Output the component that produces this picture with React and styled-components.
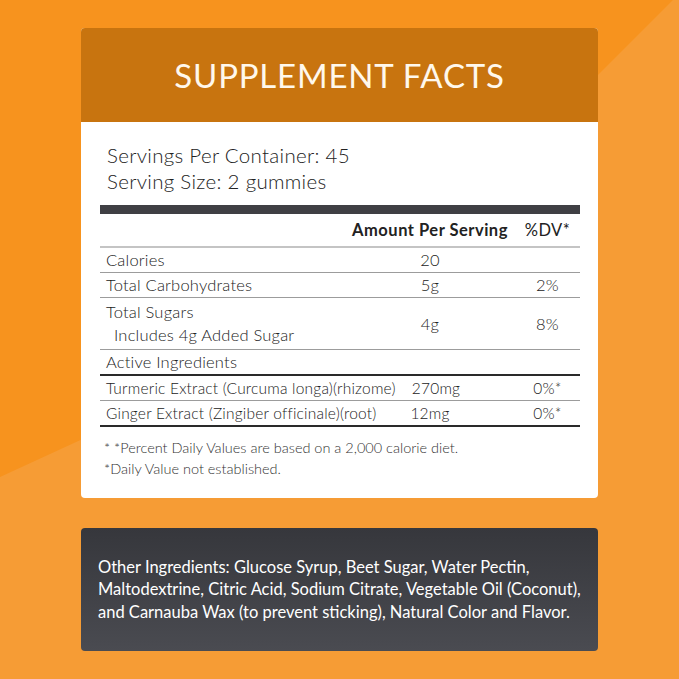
import React from 'react';
import styled, { createGlobalStyle } from 'styled-components';

const GlobalStyle = createGlobalStyle`
  html, body {
    margin: 0;
    padding: 0;
  }
  body {
    font-family: Lato, "Open Sans", sans-serif;
    color: #2b2b2b;
  }
`;

const rows = [
  { label: 'Calories', amount: '20', dv: '' },
  { label: 'Total Carbohydrates', amount: '5g', dv: '2%' },
  { label: 'Total Sugars', sub: 'Includes 4g Added Sugar', amount: '4g', dv: '8%', tall: true },
  { label: 'Active Ingredients', amount: '', dv: '', strong: true },
  { label: 'Turmeric Extract (Curcuma longa)(rhizome)', amount: '270mg', dv: '0%*', small: true, shift: 6 },
  { label: 'Ginger Extract (Zingiber officinale)(root)', amount: '12mg', dv: '0%*', small: true, strong: true },
];

const otherLines = [
  'Other Ingredients: Glucose Syrup, Beet Sugar, Water Pectin,',
  'Maltodextrine, Citric Acid, Sodium Citrate, Vegetable Oil (Coconut),',
  'and Carnauba Wax (to prevent sticking), Natural Color and Flavor.',
];

const App = () => {
  return (
    <Page>
      <GlobalStyle />
      <Card>
        <Header>SUPPLEMENT FACTS</Header>
        <Body>
          <Servings>
            <div>Servings Per Container: 45</div>
            <div>Serving Size: 2 gummies</div>
          </Servings>
          <ThickBar />
          <Table>
            <HeadRow>
              <span />
              <HeadCell $weight={700}>Amount Per Serving</HeadCell>
              <HeadCell $weight={400}>%DV*</HeadCell>
            </HeadRow>
            {rows.map((r) => (
              <Row key={r.label} $tall={r.tall} $strong={r.strong} $small={r.small}>
                <Label>
                  {r.label}
                  {r.sub && <Sub>{r.sub}</Sub>}
                </Label>
                <Amount $shift={r.shift}>{r.amount}</Amount>
                <Dv>{r.dv}</Dv>
              </Row>
            ))}
          </Table>
          <Notes>
            <Note>* *Percent Daily Values are based on a 2,000 calorie diet.</Note>
            <Note>*Daily Value not established.</Note>
          </Notes>
        </Body>
      </Card>
      <Other>
        {otherLines.map((line) => (
          <OtherLine key={line}>{line}</OtherLine>
        ))}
      </Other>
    </Page>
  );
};

export default App;

const Page = styled.div`
  position: relative;
  width: 679px;
  height: 679px;
  box-sizing: border-box;
  padding: 28px 81px 0;
  background: #f7931e;
  overflow: hidden;
  display: flex;
  flex-direction: column;
  gap: 30px;

  &::before {
    content: '';
    position: absolute;
    inset: 0;
    background: #f69c35;
    clip-path: polygon(0 477px, 363px 310px, 673px 0, 679px 0, 679px 679px, 0 679px);
  }
`;

const Card = styled.section`
  position: relative;
  height: 470px;
  background: #fff;
  border-radius: 4px;
  overflow: hidden;
  display: flex;
  flex-direction: column;
`;

const Header = styled.h1`
  margin: 0;
  height: 94px;
  display: flex;
  align-items: center;
  justify-content: center;
  background: #c8740f;
  color: #fff8ec;
  font-family: Lato, sans-serif;
  font-weight: 400;
  font-size: 33px;
  letter-spacing: 0.8px;
`;

const Body = styled.div`
  padding: 20px 18px 0 19px;
`;

const Servings = styled.div`
  padding-left: 7px;
  font-size: 20.5px;
  font-weight: 300;
  line-height: 26px;
  letter-spacing: 0.3px;
  color: #222;
`;

const ThickBar = styled.div`
  margin-top: 11px;
  height: 9px;
  background: #3f3f44;
`;

const Table = styled.div`
  display: flex;
  flex-direction: column;
`;

const grid = `
  display: grid;
  grid-template-columns: minmax(0, 1fr) 170px 65px;
  align-items: center;
`;

const HeadRow = styled.div`
  ${grid}
  height: 32px;
  border-bottom: 2px solid #c4c4c4;
`;

const HeadCell = styled.span`
  text-align: center;
  font-size: 16.5px;
  font-weight: ${(p) => p.$weight};
  color: #222;
  letter-spacing: 0.5px;
`;

const Row = styled.div`
  ${grid}
  height: ${(p) => (p.$tall ? 51 : 24)}px;
  border-bottom: ${(p) => (p.$strong ? '2px solid #2a2a2a' : '1px solid #9c9c9c')};
  font-size: ${(p) => (p.$small ? 15.5 : 16.5)}px;
  font-weight: 300;
  letter-spacing: 0.2px;
  color: #222;
`;

const Label = styled.span`
  padding-left: 6px;
  display: flex;
  flex-direction: column;
  line-height: 23px;
  white-space: nowrap;
`;

const Sub = styled.span`
  padding-left: 8px;
`;

const Amount = styled.span`
  text-align: center;
  padding-left: ${(p) => (p.$shift || 0) * 2}px;
`;

const Dv = styled.span`
  text-align: center;
`;

const Notes = styled.div`
  padding: 12px 0 0 4px;
  display: flex;
  flex-direction: column;
  gap: 4px;
`;

const Note = styled.div`
  font-size: 14.5px;
  font-weight: 300;
  line-height: 17px;
  color: #333;
`;

const Other = styled.section`
  position: relative;
  height: 123px;
  box-sizing: border-box;
  padding: 0 14px 0 17px;
  border-radius: 4px;
  background: linear-gradient(180deg, #36373c 0%, #4a4b51 100%);
  display: flex;
  flex-direction: column;
  justify-content: center;
  color: #fff;
`;

const OtherLine = styled.div`
  font-size: 16.5px;
  font-weight: 400;
  line-height: 22.5px;
  white-space: nowrap;
`;
